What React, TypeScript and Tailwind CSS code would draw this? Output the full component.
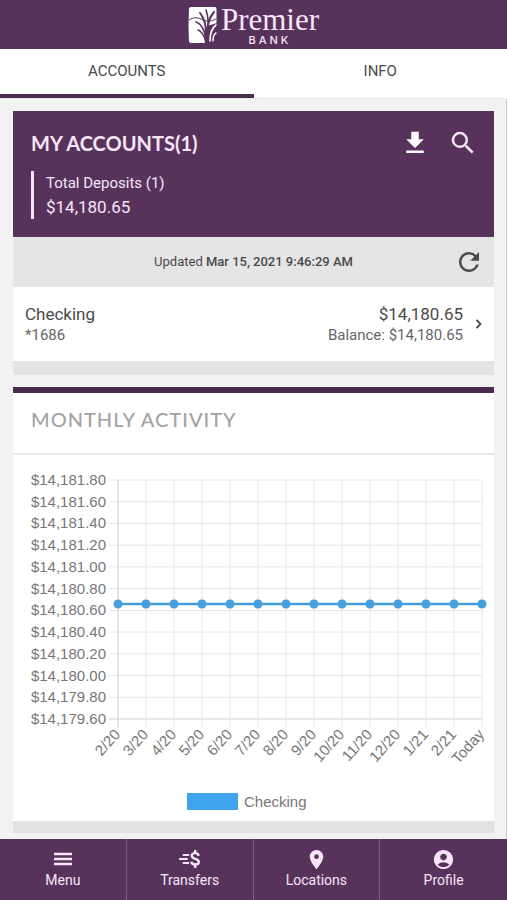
import { useState } from 'react';
import { MdAccountCircle, MdPlace, MdRefresh, MdSearch } from 'react-icons/md';

const TABS = ['ACCOUNTS', 'INFO'];

const MONTHS = [
  '2/20', '3/20', '4/20', '5/20', '6/20', '7/20', '8/20',
  '9/20', '10/20', '11/20', '12/20', '1/21', '2/21', 'Today',
];

const TICKS = [
  '$14,181.80', '$14,181.60', '$14,181.40', '$14,181.20', '$14,181.00', '$14,180.80',
  '$14,180.60', '$14,180.40', '$14,180.20', '$14,180.00', '$14,179.80', '$14,179.60',
];

const NAV = [
  { label: 'Menu', icon: <MenuIcon /> },
  { label: 'Transfers', icon: <TransferIcon /> },
  { label: 'Locations', icon: <MdPlace size={23} /> },
  { label: 'Profile', icon: <MdAccountCircle size={23} /> },
];

function MenuIcon() {
  return (
    <svg width="18" height="14" viewBox="0 0 18 14" fill="none" stroke="currentColor" strokeWidth="2.4">
      <path d="M0 2h18M0 7h18M0 12h18" />
    </svg>
  );
}

function TransferIcon() {
  return (
    <svg width="22" height="20" viewBox="0 0 24 22" fill="none" stroke="currentColor" strokeWidth="2.2">
      <path d="M4 6.500h7M0 11h9.500M4 15.500h7" />
      <path
        d="M21.500 7.500c-.3-1.900-1.700-3-3.800-3-2.200 0-3.800 1.100-3.800 2.900 0 4.200 7.800 2.500 7.800 6.700 0 1.900-1.700 3-4 3-2.300 0-4-1.200-4.100-3.200M17.700 1v3.500M17.700 17v4"
        strokeWidth="2.600"
      />
    </svg>
  );
}

function DownloadIcon() {
  return (
    <svg width="30" height="30" viewBox="0 0 24 24" fill="currentColor">
      <path d="M19 9h-4V3H9v6H5l7 7 7-7zM5 18v2h14v-2H5z" />
    </svg>
  );
}

function Logo() {
  return (
    <div className="flex items-start gap-1 text-[#f6e6f8]">
      <svg width="29" height="38" viewBox="0 0 29 38">
        <path d="M3 1h24q1.500 0 1.500 2v33q0 1-1.500 1H3q-2 0-2-2Q0 20 1 3q0-2 2-2z" fill="#fff" />
        <path d="M17 38c-1-7-1-13 2-18l10-3v21z" fill="#57335c" />
        <g fill="none" stroke="#57335c" strokeLinecap="round">
          <path d="M1 14c4-3 9-3 14 0 5 2 9 1 13-1" strokeWidth="1" />
          <path d="M12 7c4 5 6 12 6 20" strokeWidth="2" />
          <path d="M18 4c3 8 3 15 1 25" strokeWidth="1.600" />
          <path d="M26 6c-5 6-7 12-6 20" strokeWidth="2" />
          <path d="M8 16c6 2 9 9 11 20" strokeWidth="1.800" />
          <path d="M10 24c4 1 6 6 8 11" strokeWidth="1.400" />
        </g>
        <g fill="none" stroke="#fff" strokeLinecap="round">
          <path d="M28 19c-4 3-6 8-6 16" strokeWidth="1.600" />
          <path d="M28 27c-2 1-3 4-3 8" strokeWidth="1.400" />
        </g>
      </svg>
      <div className="flex flex-col items-center">
        <span className="font-['Liberation_Serif',serif] text-[31px] leading-7">Premier</span>
        <span className="font-[Inter,sans-serif] text-[11px] leading-3 font-medium tracking-[3px]">BANK</span>
      </div>
    </div>
  );
}

function ActivityChart() {
  const left = 105;
  const top = 25;
  const stepX = 28;
  const plotHeight = 239;
  const rowHeight = plotHeight / (TICKS.length - 1);
  const right = left + stepX * (MONTHS.length - 1);
  const bottom = top + plotHeight;
  const lineY = 149;

  return (
    <svg
      viewBox="0 0 481 366"
      role="img"
      aria-label="Monthly activity for Checking"
      className="block w-full font-['Liberation_Sans',Arial,sans-serif] text-[15px]"
    >
      {TICKS.map((tick, i) => {
        const y = top + i * rowHeight;
        return (
          <g key={tick}>
            <line x1={left - 9} x2={right} y1={y} y2={y} stroke={i === TICKS.length - 1 ? '#cfcfcf' : '#e4e4e4'} />
            <text x={93} y={y + 5} textAnchor="end" fill="#777">{tick}</text>
          </g>
        );
      })}
      {MONTHS.map((month, i) => {
        const x = left + i * stepX;
        return (
          <g key={month}>
            <line x1={x} x2={x} y1={top} y2={bottom + 9} stroke={i === 0 ? '#cfcfcf' : '#e4e4e4'} />
            <text textAnchor="end" fill="#777" transform={`translate(${x + 3} ${bottom + 16}) rotate(-48)`}>
              {month}
            </text>
          </g>
        );
      })}
      <line x1={left} x2={right} y1={lineY} y2={lineY} stroke="#459fdc" strokeWidth="2.500" />
      {MONTHS.map((month, i) => (
        <circle key={month} cx={left + i * stepX} cy={lineY} r="4.500" fill="#459fdc" />
      ))}
      <rect x="174" y="338" width="51" height="17" fill="#3fa4f0" />
      <text x="231" y="352" fill="#777">Checking</text>
    </svg>
  );
}

export default function App() {
  const [tab, setTab] = useState('ACCOUNTS');

  return (
    <div className="flex min-h-screen flex-col bg-[#f2f2f2] font-[Roboto,sans-serif] text-[#4a4a4a]">
      <header className="flex justify-center bg-[#57335c] pt-1.5 pb-[3px]">
        <Logo />
      </header>

      <div role="tablist" className="grid grid-cols-2 border-b border-[#e6e6e6] bg-white">
        {TABS.map(t => (
          <button
            key={t}
            type="button"
            role="tab"
            aria-selected={tab === t}
            onClick={() => setTab(t)}
            className={`border-b-4 pt-3 pb-[13px] text-[15px] leading-5 ${tab === t ? 'border-[#4b2c50]' : 'border-transparent'}`}
          >
            {t}
          </button>
        ))}
      </div>

      <main className="flex flex-1 flex-col gap-3 border-r border-[#c8c8c8] pt-3 pr-3 pb-1.5 pl-[13px]">
        {/* Account summary */}
        <section>
          <div className="bg-[#57335c] pt-4 pr-4 pb-[18px] pl-[18px] text-[#f6e6f8]">
            <div className="flex items-center justify-between">
              <h2 className="font-[Lato,sans-serif] text-xl leading-8 font-bold">MY ACCOUNTS(1)</h2>
              <div className="flex gap-[18px]">
                <button type="button" aria-label="Download" className="text-white"><DownloadIcon /></button>
                <button type="button" aria-label="Search"><MdSearch size={30} /></button>
              </div>
            </div>
            <div className="mt-3 border-l-3 border-[#f6e6f8] pl-3">
              <p className="text-[15px] leading-6">Total Deposits (1)</p>
              <p className="text-[17px] leading-6">$14,180.65</p>
            </div>
          </div>

          <div className="flex items-center bg-[#e5e5e5] py-2.5 pr-2.5 pl-10">
            <p className="flex-1 text-center text-[13px] leading-5">
              Updated <span className="font-medium">Mar 15, 2021 9:46:29 AM</span>
            </p>
            <button type="button" aria-label="Refresh"><MdRefresh size={30} /></button>
          </div>

          <a href="#checking" className="flex items-center justify-between bg-white px-3 py-4">
            <div>
              <p className="text-[17px] leading-[22px]">Checking</p>
              <p className="text-[15px] leading-5 text-[#666]">*1686</p>
            </div>
            <div className="flex items-center gap-3">
              <div className="text-right">
                <p className="text-[17px] leading-[22px]">$14,180.65</p>
                <p className="text-[15px] leading-5 text-[#666]">Balance: $14,180.65</p>
              </div>
              <svg width="7" height="10" viewBox="0 0 7 10" fill="none" stroke="currentColor" strokeWidth="1.800">
                <path d="M1.500 1l4 4-4 4" />
              </svg>
            </div>
          </a>
          <div className="h-3.5 bg-[#e3e3e3]" />
        </section>

        {/* Chart card */}
        <section>
          <div className="border-t-6 border-b-2 border-t-[#4b2c50] border-b-[#e8e8e8] bg-white px-[18px] pt-2.5 pb-[18px]">
            <h2 className="font-[Lato,sans-serif] text-xl leading-8 font-medium tracking-wider text-[#a3a3a3]">
              MONTHLY ACTIVITY
            </h2>
          </div>
          <div className="bg-white">
            <ActivityChart />
          </div>
          <div className="h-3 bg-[#e1e3e1]" />
        </section>
      </main>

      <nav className="sticky bottom-0 grid grid-cols-4 divide-x divide-[#7b5b80] bg-[#57335c] text-[#f6e6f8]">
        {NAV.map(({ label, icon }) => (
          <button key={label} type="button" className="flex flex-col items-center pt-2 pb-[11px] text-sm leading-[18px]">
            <span className="flex h-6 items-center">{icon}</span>
            {label}
          </button>
        ))}
      </nav>
    </div>
  );
}
